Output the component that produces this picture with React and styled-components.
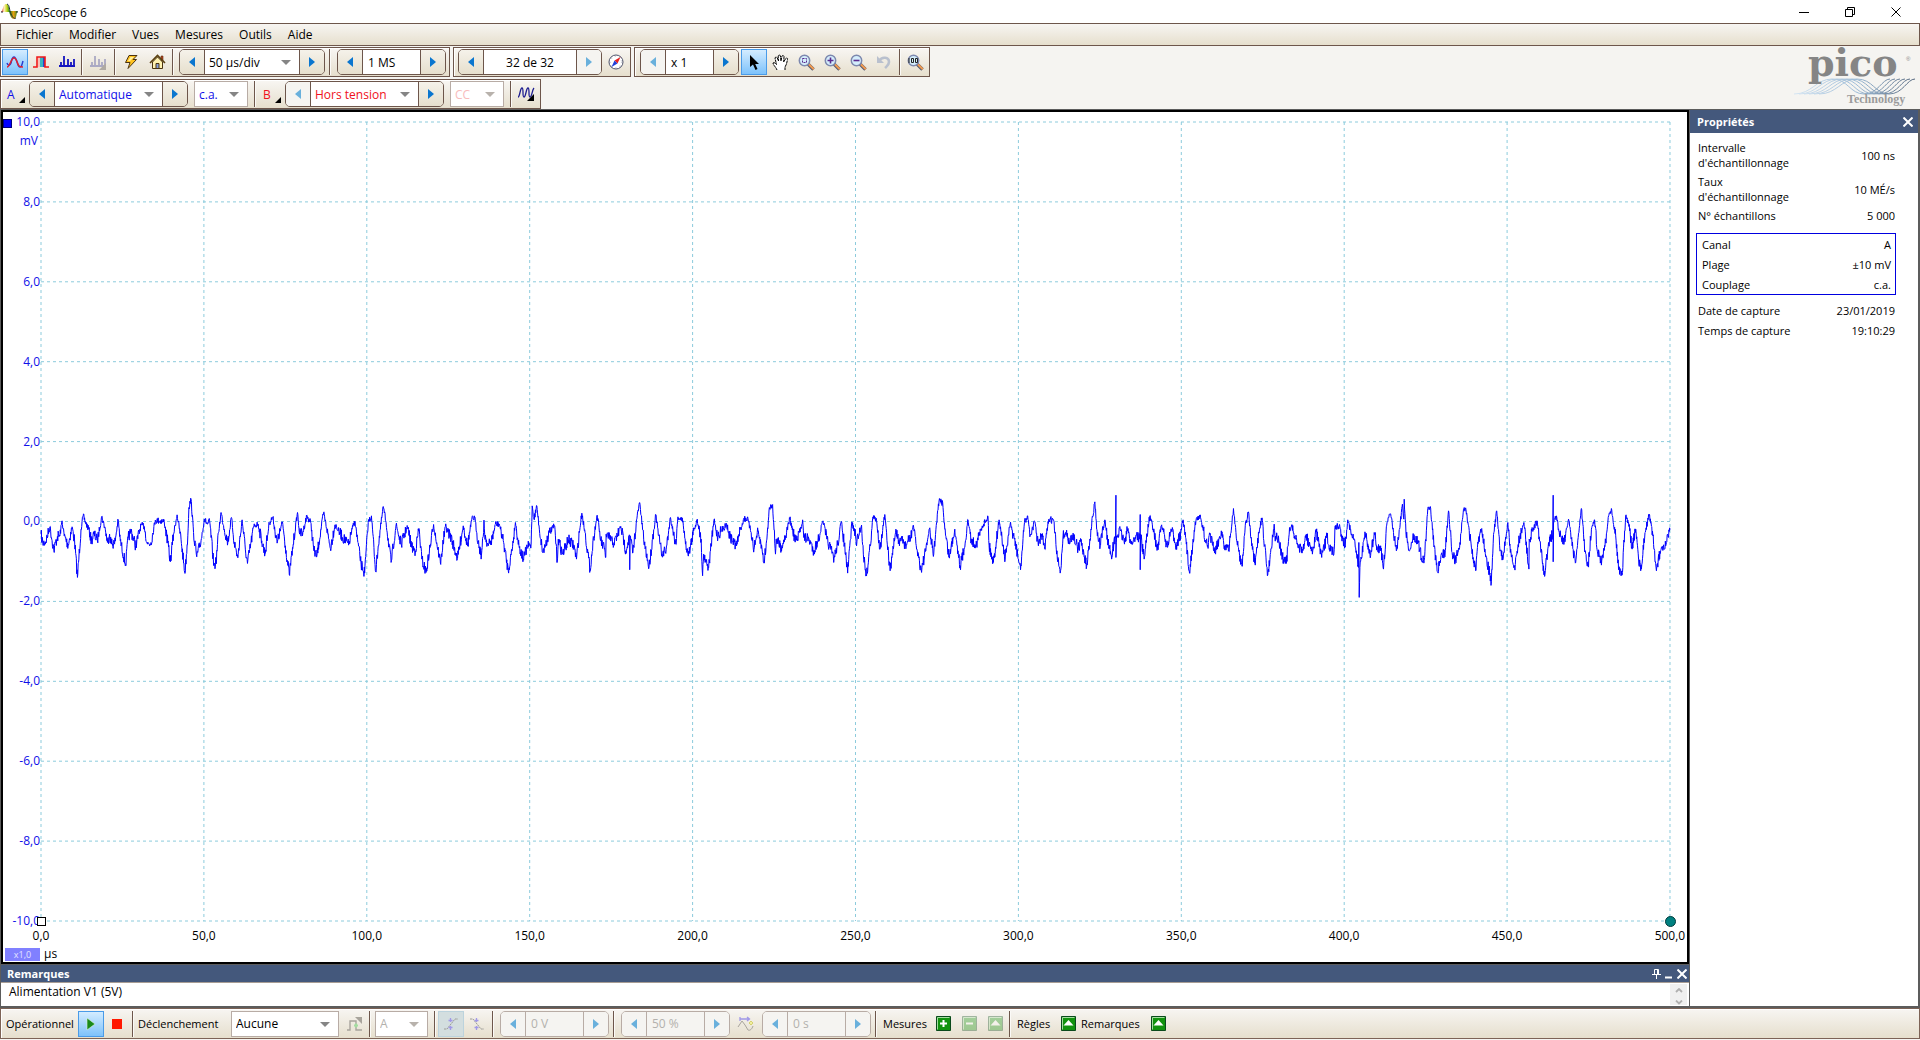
import React from 'react'
import styled, { createGlobalStyle, css } from 'styled-components'

const GlobalStyle = createGlobalStyle`
    * {
        box-sizing: border-box;
    }
    body {
        margin: 0;
        background: #f5f4f1;
        color: #000;
    }
    body, button, input, select, textarea {
        font-family: "Open Sans", "Noto Sans", sans-serif;
        font-size: 12px;
    }
    button, input, select, textarea {
        margin: 0;
        padding: 0;
        border: 0;
        border-radius: 0;
        background: none;
        color: inherit;
        outline: none;
    }
    svg {
        display: block;
    }
`

const Page = styled.div`
    display: flex;
    flex-direction: column;
    height: 100vh;
    overflow: hidden;
`

/* ---------- title bar and menu ---------- */

const TitleBar = styled.header`
    display: flex;
    align-items: center;
    height: 23px;
    padding: 0 1px;
    background: #fff;
`

const Title = styled.h1`
    flex: 1;
    margin: 0;
    padding: 2px 0 0 2px;
    font-size: 12px;
    font-weight: 400;
`

const WindowButton = styled.button`
    display: flex;
    align-items: center;
    justify-content: center;
    width: 46px;
    height: 23px;
`

const MenuBar = styled.nav`
    display: flex;
    align-items: center;
    height: 23px;
    padding-left: 7px;
    border: 1px solid #6d564b;
    background: linear-gradient(#f7f5f2, #e6dfcd);
`

const MenuItem = styled.button`
    padding: 0 8px;
    font-size: 12px;
    line-height: 20px;
`

/* ---------- tool strips ---------- */

const ToolArea = styled.div`
    display: flex;
    justify-content: space-between;
    padding-top: 1px;
`

const ToolRows = styled.div`
    display: flex;
    flex-direction: column;
    gap: 2px;
`

const ToolRow = styled.div`
    display: flex;
    gap: 3px;
`

const Strip = styled.div`
    display: flex;
    align-items: center;
    height: 30px;
    padding: 0 1px;
    border: 1px solid #6d564b;
    box-shadow: inset 1px 1px 0 #fff;
    background: linear-gradient(#f8f6f3, #e6dfcd);
`

const Separator = styled.span`
    width: 1px;
    height: 26px;
    margin: 0 ${p => p.$after || 3}px 0 ${p => p.$before || 3}px;
    background: #6d564b;
    box-shadow: 1px 0 0 #fbfaf7;
`

const ToolButton = styled.button`
    display: flex;
    align-items: center;
    justify-content: center;
    width: 26px;
    height: 26px;
    ${p => p.$active && css`
        border: 1px solid #4a9be8;
        background: linear-gradient(#d4ecff, #7dc2fb);
    `}
    ${p => p.$pressed && css`
        border: 1px solid #bcd3dd;
        background: #d3dedf;
    `}
`

const ChannelButton = styled.button`
    position: relative;
    width: 25px;
    height: 26px;
    padding-left: 5px;
    text-align: left;
    font-size: 12px;
    color: ${p => p.$color};
    &::after {
        content: "";
        position: absolute;
        right: 2px;
        bottom: 4px;
        border-left: 6px solid transparent;
        border-bottom: 6px solid #000;
    }
`

const SpinBox = styled.div`
    display: flex;
    height: 26px;
    margin: 0 ${p => p.$after || 3}px 0 ${p => p.$before || 6}px;
    border: 1px solid ${p => (p.$off ? '#b8aca5' : '#6d564b')};
    border-radius: 5px;
    overflow: hidden;
`

const SpinButton = styled.button`
    display: flex;
    align-items: center;
    justify-content: center;
    width: 24px;
    background: ${p => (p.disabled ? '#f5f4f1' : 'linear-gradient(#f5f2ea, #e6dfcd)')};
    color: ${p => (p.disabled ? '#69b0dc' : '#0a76cf')};
`

const SpinInput = styled.input`
    width: ${p => p.$width}px;
    padding-left: ${p => (p.$center ? 0 : 5)}px;
    text-align: ${p => (p.$center ? 'center' : 'left')};
    border: solid ${p => (p.disabled ? '#b8aca5' : '#6d564b')};
    border-width: 0 1px;
    background: ${p => (p.disabled ? '#f5f4f1' : '#fff')};
    color: ${p => (p.disabled ? '#b3b1ad' : '#000')};
`

const SelectWrap = styled.span`
    position: relative;
    display: flex;
    width: ${p => p.$width}px;
    height: ${p => (p.$boxed ? 26 : 24)}px;
    margin: 0 ${p => p.$after || 0}px 0 ${p => p.$before || 0}px;
    background: #fff;
    border: solid ${p => (p.$boxed ? '#b8aca5' : '#6d564b')};
    border-width: ${p => (p.$boxed ? '1px' : '0 1px')};
    &::after {
        content: "";
        position: absolute;
        right: 8px;
        top: 10px;
        border: solid transparent;
        border-width: 5px 5px 0;
        border-top-color: ${p => (p.$off ? '#b8b2ac' : '#858585')};
        pointer-events: none;
    }
`

const SelectBox = styled.select`
    appearance: none;
    width: 100%;
    padding-left: 4px;
    color: ${p => p.$color || '#000'};
    opacity: 1;
`

const Logo = styled.div`
    padding: 1px 2px 0 0;
    svg {
        overflow: visible;
    }
`

/* ---------- work area ---------- */

const Work = styled.main`
    display: flex;
    flex: 1;
    min-height: 0;
    gap: 1px;
    padding: 1px 2px 2px 1px;
    background: #5c5c5c;
`

const LeftColumn = styled.div`
    display: flex;
    flex: 1;
    flex-direction: column;
    min-width: 0;
`

const Scope = styled.section`
    position: relative;
    display: grid;
    flex: 1;
    min-height: 0;
    grid-template-columns: 38px 1fr;
    grid-template-rows: 1fr 41px;
    padding: 10px 17px 0 0;
    border: 2px solid #000;
    background: #fff;
`

const YAxis = styled.div`
    position: relative;
    display: flex;
    flex-direction: column;
    justify-content: space-between;
    margin: -7px 0;
    padding-right: 1px;
    text-align: right;
    line-height: 14px;
    color: #1010e8;
`

const YUnit = styled.span`
    position: absolute;
    top: 19px;
    right: 3px;
`

const XAxis = styled.div`
    grid-column: 2;
    display: flex;
    justify-content: space-between;
    margin: 8px -15px 0;
    line-height: 14px;
`

const XTick = styled.span`
    display: flex;
    justify-content: center;
    width: 30px;
`

const Graph = styled.svg`
    width: 100%;
    height: 100%;
    overflow: visible;
`

const GraphCell = styled.div`
    position: relative;
    min-height: 0;
`

const ChannelHandle = styled.span`
    position: absolute;
    left: 0;
    top: 7px;
    width: 9px;
    height: 9px;
    border: 1px solid #000080;
    background: #00f;
`

const TimeHandle = styled.span`
    position: absolute;
    left: -4px;
    bottom: -5px;
    width: 9px;
    height: 9px;
    border: 1px solid #000;
    background: #fff;
`

const TriggerHandle = styled.span`
    position: absolute;
    right: -6px;
    bottom: -6px;
    width: 11px;
    height: 11px;
    border: 1px solid #003c3c;
    border-radius: 50%;
    background: #008080;
`

const UnitRow = styled.div`
    position: absolute;
    left: 2px;
    bottom: 1px;
    display: flex;
    align-items: center;
    gap: 4px;
    line-height: 14px;
`

const ZoomBadge = styled.span`
    width: 35px;
    height: 13px;
    background: #8080ff;
    color: #e4e4ff;
    text-align: center;
    font-size: 9px;
    line-height: 13px;
`

/* ---------- docked panels ---------- */

const PanelHead = styled.div`
    display: flex;
    align-items: center;
    gap: 4px;
    height: ${p => p.$height}px;
    padding: 0 ${p => p.$end}px 0 ${p => p.$indent}px;
    background: #44587c;
    color: #fff;
`

const PanelTitle = styled.h2`
    flex: 1;
    margin: 0;
    font-size: 11px;
    font-weight: 700;
`

const PanelButton = styled.button`
    display: flex;
    color: #fff;
`

const Notes = styled.section`
    padding-top: 1px;
`

const NotesBody = styled.div`
    display: flex;
    height: 24px;
    border-top: 1px solid #a89d94;
    background: #fff;
`

const NotesText = styled.textarea`
    flex: 1;
    padding: 1px 8px;
    font-size: 12px;
    line-height: 16px;
    resize: none;
    overflow: hidden;
`

const Scroller = styled.div`
    display: flex;
    flex-direction: column;
    justify-content: space-between;
    align-items: center;
    width: 17px;
    margin: 1px 2px 1px 0;
    padding-top: 4px;
    background: #f0f0f0;
`

const Properties = styled.aside`
    width: 228px;
    background: #fff;
`

const PropList = styled.dl`
    margin: 0;
    padding: 7px 22px 0 6px;
    font-size: 11px;
`

const PropRow = styled.div`
    display: flex;
    align-items: center;
    justify-content: space-between;
    min-height: ${p => p.$height || 20}px;
    margin-bottom: ${p => p.$gap || 0}px;
    padding: 0 1px 0 2px;
    line-height: 15px;
    dt {
        width: 100px;
    }
    dd {
        margin: 0;
        white-space: nowrap;
    }
`

const ChannelProps = styled.div`
    margin: 8px 0 5px;
    border: 1px solid #0000e0;
    padding: 0 3px;
`

/* ---------- status bar ---------- */

const StatusBar = styled.footer`
    display: flex;
    align-items: center;
    height: 31px;
    margin-bottom: 1px;
    padding-left: 5px;
    border: 1px solid #7d6356;
    box-shadow: inset 1px 1px 0 #fff;
    background: linear-gradient(#f7f5f2, #e6dfcd);
`

const StatusLabel = styled.span`
    width: ${p => p.$width}px;
    font-size: 11px;
    white-space: nowrap;
`

/* ---------- icons ---------- */

const Arrow = ({ right }) => (
    <svg width="6" height="10" viewBox="0 0 6 10">
        <path d={right ? 'M0 0l6 5-6 5z' : 'M6 0L0 5l6 5z'} fill="currentColor" />
    </svg>
)

const AppIcon = () => (
    <svg width="17" height="17" viewBox="0 0 17 17">
        <defs>
            <linearGradient id="hump">
                <stop offset="0" stopColor="#e01010" />
                <stop offset=".35" stopColor="#fff4c0" />
                <stop offset=".65" stopColor="#c8d820" />
                <stop offset="1" stopColor="#108010" />
            </linearGradient>
            <linearGradient id="dip">
                <stop offset="0" stopColor="#108010" />
                <stop offset=".5" stopColor="#e8a010" />
                <stop offset="1" stopColor="#208020" />
            </linearGradient>
        </defs>
        <path d="M0 9C2 8 2 1 5 1s3 4 4 8z" fill="url(#hump)" />
        <path d="M8 8h9c-2 1-1 8-4 8s-4-4-5-8z" fill="url(#dip)" />
        <path d="M0 9h2M15 9h2M6 1c3 1 2 6 4 10s3 5 5 4" fill="none" stroke="#243040" />
    </svg>
)

const MinimizeIcon = () => (
    <svg width="10" height="10"><path d="M0 5.5h10" stroke="#000" /></svg>
)

const RestoreIcon = () => (
    <svg width="10" height="10" fill="none" stroke="#000">
        <path d="M.5 2.5h7v7h-7zM2.5 2.5v-2h7v7h-2" />
    </svg>
)

const CloseIcon = ({ size = 10, width = 1 }) => (
    <svg width={size} height={size} viewBox="0 0 10 10">
        <path d="M.5 .5l9 9M9.5 .5l-9 9" stroke="currentColor" strokeWidth={width} />
    </svg>
)

const ScopeIcon = () => (
    <svg width="18" height="14" viewBox="0 0 18 14" fill="none" strokeWidth="1.5">
        <path d="M1 8c1 3 3 3 4 0 1-4 1-6 3-6 3 0 3 10 6 10 2 0 2-3 3-6" stroke="#2a3fd0" />
        <path d="M1 12c3 0 4-9 7-9 3 0 3 6 5 8 1 1 3 1 4 1" stroke="#e02030" />
    </svg>
)

const PersistenceIcon = () => (
    <svg width="18" height="14" viewBox="0 0 18 14">
        <path d="M6 2h2v10H6z" fill="#f8c0b8" />
        <path d="M8 2h3v10H8z" fill="#38b4c0" />
        <path d="M11 2h2v10h-2z" fill="#2848d0" />
        <path d="M1 12h4V2h8v10h4" fill="none" stroke="#f01818" strokeWidth="1.6" />
    </svg>
)

const SpectrumIcon = ({ off }) => (
    <svg width="18" height="16" viewBox="0 0 18 16">
        <path
            d="M1 12h16M3 12V8M6 12V2M10 12V5M13 12V8M16 12V5"
            stroke={off ? '#aaa9c4' : '#1414c0'}
            strokeWidth="1.8"
        />
        {off && <path d="M17 9v7h-7z" fill="#b0aaa2" />}
    </svg>
)

const BoltIcon = () => (
    <svg width="16" height="16" viewBox="0 0 16 16">
        <path d="M6 1.500h8l-4 4h3.500L5 14.500l2-6H2.500z" fill="#ffc21e" stroke="#4a3210" />
        <path d="M7.500 3h3.500l-4 4H5z" fill="#fff0a0" />
    </svg>
)

const HomeIcon = () => (
    <svg width="17" height="16" viewBox="0 0 17 16">
        <path d="M12 2h2v5h-2z" fill="#b84020" stroke="#5a3010" strokeWidth=".6" />
        <path d="M3.500 8v6.500h10V8l-5-5z" fill="#fff2b0" stroke="#4a3410" />
        <path d="M7 9.500h3v5H7z" fill="#8aa0d8" stroke="#4a3410" />
        <path d="M1 9l7.500-7.500L16 9" fill="none" stroke="#5a4010" strokeWidth="1.6" />
    </svg>
)

const CompassIcon = () => (
    <svg width="16" height="16" viewBox="0 0 16 16">
        <circle cx="8" cy="8" r="7" fill="#fff" stroke="#4b5068" />
        <circle cx="8" cy="8" r="5.500" fill="none" stroke="#b8bcc8" strokeDasharray="1 3" />
        <path d="M12.500 3L9.500 9.500l-3-3z" fill="#e82020" />
        <path d="M3.500 13l3-6.500 3 3z" fill="#2040d8" />
    </svg>
)

const PointerIcon = () => (
    <svg width="12" height="17" viewBox="0 0 12 17">
        <path d="M2 1v12l3-2.500 2.500 5.500 2-1-2.300-5H11z" fill="#000" />
    </svg>
)

const HandIcon = () => (
    <svg width="17" height="17" viewBox="0 0 17 17">
        <path
            d="M5 16c-1-3-4-5-4-7 1.500-1 2.500.5 3.500 1.500L3 4c.5-1.500 2-1 2.300 0L6.500 7 6.200 2c.5-1.500 2-1.200 2.200 0L9 7l1-5c.8-1 2-.6 2 .6L11.700 8l2-3.500c1-1 2.300-.2 1.800 1C15 8 14.500 11 13 13v3"
            fill="#fff"
            stroke="#000"
            strokeDasharray="3 .5"
        />
    </svg>
)

const LensIcon = ({ kind }) => (
    <svg width="17" height="17" viewBox="0 0 17 17">
        <path d="M10 10l5.500 5.500" stroke="#555a70" strokeWidth="3.400" />
        <path d="M10.800 10.300l5 5" stroke="#f09a50" strokeWidth="2" />
        <circle cx="6.500" cy="6.500" r="5.200" fill="#d4eefc" stroke="#7d88ae" strokeWidth="1.500" />
        {kind === 'in' && <path d="M3.500 6.500h6M6.500 3.500v6" stroke="#5a2a90" strokeWidth="1.600" />}
        {kind === 'out' && <path d="M3.500 6.500h6" stroke="#5a2a90" strokeWidth="1.600" />}
        {kind === 'area' && (
            <path d="M4.500 4.500h4v4h-4z" fill="none" stroke="#5a2a90" strokeDasharray="2 1" />
        )}
        {kind === 'full' && (
            <path
                d="M2 4v5M4.500 4.500h2v4h-2zM8.500 4.500h2v4h-2z"
                fill="none"
                stroke="#222"
            />
        )}
    </svg>
)

const UndoIcon = () => (
    <svg width="16" height="16" viewBox="0 0 16 16">
        <path d="M3 7c3-5 10-4 10 1 0 3-2 4-4 6" fill="none" stroke="#b9c0ce" strokeWidth="2.600" />
        <path d="M1 2v7h7z" fill="#b9c0ce" />
    </svg>
)

const WavesIcon = () => (
    <svg width="18" height="16" viewBox="0 0 18 16">
        <path d="M1 11c2 0 2-9 4-9s0 9 2 9 2-9 4-9 0 9 2 9 2-7 4-9" fill="none" stroke="#1c1c90" strokeWidth="1.300" />
        <path d="M17 8v7h-7z" fill="#000" />
    </svg>
)

const PlayIcon = () => (
    <svg width="10" height="14" viewBox="0 0 10 14">
        <path d="M1 1l8 6-8 6z" fill="#1a8a1a" stroke="#dff5df" strokeWidth=".6" />
    </svg>
)

const StopIcon = () => (
    <svg width="10" height="10"><path d="M0 0h10v10H0z" fill="#ff1800" /></svg>
)

const AdvancedTriggerIcon = () => (
    <svg width="17" height="16" viewBox="0 0 17 16">
        <path d="M1 14h3V5h6v9h6" fill="none" stroke="#a8a49c" strokeWidth="1.400" />
        <path d="M9 1h7v7z" fill="#a8a49c" />
        <path d="M8 9.500h4M10 7.500v4" stroke="#a4dca0" strokeWidth="2" />
    </svg>
)

const EdgeIcon = ({ falling }) => (
    <svg width="16" height="14" viewBox="0 0 16 14" fill="none">
        <path
            d={falling ? 'M1 2h3l8 10h3' : 'M1 12h3l8-10h3'}
            stroke="#9c9c98"
            strokeDasharray="2 .6"
        />
        <path d="M7.500 1v4M5.500 3.500h4M7.500 9v4M5.500 10.500h4" stroke="#a098e8" strokeWidth="1.300" />
    </svg>
)

const DelayIcon = () => (
    <svg width="17" height="16" viewBox="0 0 17 16" fill="none">
        <path d="M1 11l4-6 3 4 3 5c2 1 4-1 5-4" stroke="#a8a49c" />
        <path d="M3 3h9M10 1l2.500 2L10 5M3 1v4" stroke="#a098e8" strokeWidth="1.300" />
        <path d="M14 5l2 2-2 2-2-2z" stroke="#d4d070" fill="#f0ee9c" />
    </svg>
)

const GreenIcon = ({ sign, off }) => (
    <svg width="15" height="15" viewBox="0 0 15 15" opacity={off ? 0.35 : 1}>
        <path d="M.5 .5h14v14H.5z" fill="#12930f" stroke="#0a4a1c" />
        <path d="M1.500 13.500v-12h12" fill="none" stroke="#a5dca0" />
        {sign === 'plus' && <path d="M4 7.500h7M7.500 4v7" stroke="#fff" strokeWidth="2" />}
        {sign === 'minus' && <path d="M4 7.500h7" stroke="#fff" strokeWidth="2" />}
        {sign === 'up' && <path d="M7.500 4l5 5.500h-10z" fill="#fff" />}
    </svg>
)

const PinIcon = () => (
    <svg width="9" height="10" viewBox="0 0 9 10" fill="none" stroke="#fff">
        <path d="M2.500 5.500v-5h4v5M0 5.500h9M5.500 .5v5M4.500 6v4" />
    </svg>
)

const DockMinIcon = () => (
    <svg width="8" height="10"><path d="M0 8.500h7" stroke="#fff" strokeWidth="2" /></svg>
)

const Chevron = ({ down }) => (
    <svg width="8" height="5" viewBox="0 0 8 5">
        <path d={down ? 'M1 .5l3 3 3-3' : 'M1 4l3-3 3 3'} fill="none" stroke="#b0b0b0" strokeWidth="1.800" />
    </svg>
)

const logoWaves = [0, 5, 10, 15, 20, 25]

const PicoLogo = () => (
    <svg width="122" height="60" viewBox="0 0 122 60" role="img" aria-label="pico Technology">
        <defs>
            <linearGradient id="wave" gradientUnits="userSpaceOnUse" x1="0" y1="0" x2="122" y2="0">
                <stop offset="0" stopColor="#d3e4f2" />
                <stop offset=".5" stopColor="#9dbbd6" />
                <stop offset="1" stopColor="#4f6178" />
            </linearGradient>
        </defs>
        {logoWaves.map(x => (
            <path
                key={x}
                d={`M${x - 2} 46C${x + 16} 46 ${x + 20} 31 ${x + 36} 31S${x + 54} 46 ${x + 68} 46S${x + 86} 31 ${x + 94} 31`}
                fill="none"
                stroke="url(#wave)"
            />
        ))}
        <text x="12" y="28" fontFamily="DejaVu Serif" fontWeight="700" fontSize="38" fill="#858585">pico</text>
        <text x="110" y="13" fontFamily="Liberation Sans" fontSize="6" fill="#858585">®</text>
        <text x="51" y="55" fontFamily="Liberation Serif" fontWeight="700" fontSize="12" fill="#9b9b9b">Technology</text>
    </svg>
)

/* ---------- trace ---------- */

// turning points of the capture, [time, level] in acquisition counts;
// every block keeps its own time origin
const blocks = [
    {
        offset: -32,
        points: [
            [32, 165], [37, 192], [45, 188], [57, 143], [68, 213], [78, 172], [85, 170], [91, 125], [97, 170],
            [108, 198], [119, 143], [126, 185], [134, 295], [144, 150], [150, 110], [158, 133], [166, 150],
            [173, 185], [180, 165], [190, 183], [202, 112], [212, 150], [218, 190], [224, 165], [228, 190],
            [238, 195], [248, 122], [254, 185], [269, 257], [276, 175], [284, 155], [297, 200], [312, 138],
            [321, 142], [330, 195], [340, 190], [352, 123], [377, 127], [387, 190], [394, 248], [403, 165],
            [413, 107], [424, 180], [435, 283], [443, 170], [446, 85], [452, 60], [459, 160], [468, 233],
            [480, 185], [489, 120], [498, 135], [504, 125], [516, 260], [522, 250], [529, 160], [536, 100],
            [545, 150], [555, 190], [565, 115], [573, 190], [583, 236], [595, 122], [604, 210], [610, 253],
            [628, 140], [640, 135], [650, 185], [659, 225], [671, 130], [681, 115], [693, 192], [708, 128],
            [716, 200], [727, 286], [738, 195], [750, 100], [756, 165], [765, 160], [776, 110], [787, 130],
            [796, 215], [804, 232], [823, 100], [835, 165], [842, 208], [855, 137], [868, 160], [880, 180],
            [893, 198], [903, 150], [911, 127], [919, 190], [928, 255], [938, 282], [948, 130], [957, 110],
            [969, 278], [976, 200], [990, 82], [998, 130], [1012, 250], [1026, 137], [1040, 195], [1058, 142],
            [1070, 205], [1080, 215], [1090, 148], [1098, 240], [1110, 280], [1131, 136], [1150, 252],
            [1164, 142], [1180, 175], [1198, 238], [1214, 140], [1226, 200], [1238, 120], [1246, 115],
            [1256, 190], [1265, 228], [1271, 160], [1272, 123], [1274, 165], [1284, 200], [1295, 180],
            [1304, 135], [1315, 135], [1327, 190], [1340, 275], [1350, 215], [1360, 130], [1370, 200],
            [1382, 240], [1393, 205], [1404, 195], [1407, 80], [1412, 120], [1420, 80], [1427, 150],
            [1437, 220], [1455, 160], [1470, 140], [1477, 250], [1480, 180], [1492, 225], [1508, 182],
            [1524, 200], [1531, 240],
        ],
    },
    {
        offset: 1507,
        points: [
            [0, 160], [7, 102], [16, 160], [30, 272], [40, 175], [50, 108], [60, 185], [70, 210], [74, 235],
            [75, 165], [97, 193], [116, 142], [130, 215], [141, 170], [141, 272], [142, 170], [150, 220],
            [162, 110], [169, 70], [180, 180], [195, 265], [205, 180], [214, 106], [222, 170], [231, 225],
            [243, 212], [255, 115], [270, 195], [276, 113], [290, 125], [297, 195], [307, 222], [320, 155],
            [330, 120], [341, 180], [345, 290], [348, 225], [362, 265], [377, 122], [386, 170], [397, 155],
            [412, 135], [422, 175], [440, 200], [447, 165], [460, 120], [470, 118], [481, 160], [489, 210],
            [498, 160], [508, 192], [517, 250], [525, 180], [532, 85], [541, 76], [549, 225], [551, 180],
            [565, 205], [577, 170], [589, 118], [602, 175], [610, 185], [625, 122], [628, 175], [643, 180],
            [656, 215], [668, 185], [682, 125], [693, 180], [713, 238], [724, 190], [733, 128], [742, 195],
            [751, 282], [763, 128], [777, 188], [790, 138], [795, 225], [804, 290], [814, 200], [822, 113],
            [832, 125], [842, 210], [855, 106], [862, 195], [870, 275], [886, 150], [896, 200], [903, 175],
            [912, 200], [927, 175], [934, 140], [946, 215], [957, 272], [970, 215], [979, 150], [992, 225],
            [1000, 130], [1007, 65], [1017, 70], [1023, 150], [1035, 235], [1051, 150], [1060, 215],
            [1066, 260], [1077, 210], [1088, 122], [1098, 190], [1112, 192], [1128, 140], [1144, 113],
            [1147, 200], [1159, 250], [1175, 122], [1192, 240], [1206, 135], [1218, 180], [1229, 240],
            [1235, 272], [1246, 130], [1255, 110], [1262, 170], [1275, 127], [1285, 200], [1294, 165],
            [1303, 210], [1314, 120], [1328, 125], [1338, 240], [1347, 275], [1354, 170], [1363, 160],
            [1372, 195], [1383, 165], [1396, 210], [1404, 185], [1420, 262], [1432, 150], [1443, 68],
            [1450, 170], [1458, 200], [1471, 122], [1480, 190], [1489, 228], [1501, 175], [1502, 48],
            [1502, 235], [1504, 170],
        ],
    },
    {
        offset: 3020,
        points: [
            [2, 155], [12, 188], [22, 152], [33, 195], [47, 165], [56, 180], [57, 106], [57, 272], [58, 165],
            [68, 240], [76, 165], [84, 110], [93, 150], [105, 210], [116, 140], [124, 165], [133, 205],
            [144, 150], [158, 198], [170, 165], [177, 122], [186, 195], [195, 282], [205, 180], [213, 125],
            [223, 108], [234, 155], [247, 208], [252, 165], [267, 222], [284, 155], [293, 200], [305, 215],
            [318, 88], [328, 190], [342, 262], [351, 140], [360, 98], [369, 200], [379, 258], [389, 160],
            [398, 116], [405, 200], [414, 288], [422, 220], [432, 135], [434, 170], [445, 185], [455, 235],
            [466, 253], [474, 165], [481, 137], [492, 180], [510, 222], [522, 165], [530, 200], [540, 215],
            [550, 158], [565, 235], [580, 170], [590, 215], [600, 212], [602, 145], [614, 140], [630, 200],
            [638, 122], [650, 170], [660, 205], [668, 265], [669, 190], [670, 355], [672, 265], [686, 158],
            [700, 225], [714, 168], [722, 215], [730, 200], [738, 270], [748, 130], [755, 105], [762, 125],
            [774, 215], [785, 130], [791, 75], [795, 120], [796, 60], [801, 165], [811, 215], [824, 168],
            [836, 190], [847, 250], [853, 235], [862, 88], [869, 82], [880, 200], [889, 278], [903, 228],
            [911, 215], [920, 95], [930, 220], [940, 247], [952, 190], [962, 90], [969, 92], [985, 210],
            [996, 275], [1004, 180], [1013, 148], [1025, 230], [1040, 308], [1047, 160], [1055, 95],
            [1063, 200], [1072, 242], [1086, 130], [1093, 220], [1105, 265], [1118, 180], [1131, 130],
            [1145, 270], [1146, 180], [1155, 155], [1168, 125], [1178, 210], [1189, 292], [1200, 190],
            [1212, 165], [1213, 48], [1213, 248], [1214, 130], [1222, 110], [1230, 160], [1244, 185],
            [1256, 120], [1266, 200], [1275, 252], [1285, 160], [1292, 88], [1302, 215], [1311, 262],
            [1320, 150], [1329, 122], [1338, 225], [1349, 243], [1360, 185], [1368, 110], [1376, 88],
            [1388, 170], [1397, 270], [1406, 288], [1416, 110], [1424, 130], [1434, 210], [1444, 150],
            [1452, 240], [1460, 270], [1470, 160], [1482, 105], [1492, 170], [1502, 275], [1512, 220],
            [1525, 210], [1540, 152],
        ],
    },
]

const ZERO = 127

const buildTrace = () => {
    const turns = blocks.flatMap(b => b.points.map(([x, y]) => [x + b.offset, y - ZERO + 1200]))
    let seed = 7
    const noise = () => {
        seed = (seed * 16807) % 2147483647
        return seed / 2147483647 - 0.5
    }
    const out = []
    turns.forEach(([x, y], i) => {
        out.push(`${x},${y}`)
        const next = turns[i + 1]
        if (!next) return
        for (let s = x + 1; s < next[0]; s += 1) {
            const t = (s - x) / (next[0] - x)
            const base = y + (next[1] - y) * t
            // the sampling noise is stronger below zero than on the peaks
            const amp = base > 1230 ? 34 : 20
            out.push(`${s},${(base + noise() * amp).toFixed(0)}`)
        }
    })
    return out.join(' ')
}

const trace = buildTrace()

const divisions = [0, 1, 2, 3, 4, 5, 6, 7, 8, 9, 10]
const yTicks = ['10,0', '8,0', '6,0', '4,0', '2,0', '0,0', '-2,0', '-4,0', '-6,0', '-8,0', '-10,0']
const xTicks = ['0,0', '50,0', '100,0', '150,0', '200,0', '250,0', '300,0', '350,0', '400,0', '450,0', '500,0']
const menus = ['Fichier', 'Modifier', 'Vues', 'Mesures', 'Outils', 'Aide']

const Select = ({ label, value, color, ...box }) => (
    <SelectWrap {...box}>
        <SelectBox aria-label={label} $color={color} disabled={box.$off} defaultValue={value}>
            <option>{value}</option>
        </SelectBox>
    </SelectWrap>
)

const Spin = ({ label, off, prevOff, nextOff, before, after, children }) => (
    <SpinBox $off={off} $before={before} $after={after}>
        <SpinButton aria-label={`${label} -`} disabled={off || prevOff}><Arrow /></SpinButton>
        {children}
        <SpinButton aria-label={`${label} +`} disabled={off || nextOff}><Arrow right /></SpinButton>
    </SpinBox>
)

const Property = ({ name, value, height, gap }) => (
    <PropRow $height={height} $gap={gap}>
        <dt>{name}</dt>
        <dd>{value}</dd>
    </PropRow>
)

const Toolbars = () => (
    <ToolArea>
        <ToolRows>
            <ToolRow>
                <Strip>
                    <ToolButton $active aria-label="Oscilloscope"><ScopeIcon /></ToolButton>
                    <ToolButton aria-label="Persistance"><PersistenceIcon /></ToolButton>
                    <ToolButton aria-label="Spectre"><SpectrumIcon /></ToolButton>
                    <Separator $before={1} />
                    <ToolButton disabled aria-label="Options du spectre"><SpectrumIcon off /></ToolButton>
                    <Separator />
                    <ToolButton aria-label="Configuration auto"><BoltIcon /></ToolButton>
                    <ToolButton aria-label="Accueil"><HomeIcon /></ToolButton>
                    <Separator $before={2} $after={1} />
                    <Spin label="Base de temps" before={5}>
                        <Select label="Base de temps" value="50 µs/div" $width={96} />
                    </Spin>
                    <Separator $before={1} $after={1} />
                    <Spin label="Échantillons" after={2}>
                        <SpinInput aria-label="Échantillons" defaultValue="1 MS" $width={59} />
                    </Spin>
                </Strip>
                <Strip>
                    <Spin label="Tampon" nextOff before={3} after={1}>
                        <SpinInput aria-label="Tampon" defaultValue="32 de 32" $width={94} $center />
                    </Spin>
                    <ToolButton aria-label="Navigateur"><CompassIcon /></ToolButton>
                </Strip>
                <Strip>
                    <Spin label="Zoom" prevOff before={4} after={2}>
                        <SpinInput aria-label="Zoom" defaultValue="x 1" $width={49} />
                    </Spin>
                    <ToolButton $active aria-label="Sélection"><PointerIcon /></ToolButton>
                    <ToolButton aria-label="Main"><HandIcon /></ToolButton>
                    <ToolButton aria-label="Zoom de zone"><LensIcon kind="area" /></ToolButton>
                    <ToolButton aria-label="Zoom avant"><LensIcon kind="in" /></ToolButton>
                    <ToolButton aria-label="Zoom arrière"><LensIcon kind="out" /></ToolButton>
                    <ToolButton disabled aria-label="Annuler le zoom"><UndoIcon /></ToolButton>
                    <Separator $before={2} $after={2} />
                    <ToolButton aria-label="Zoom 100"><LensIcon kind="full" /></ToolButton>
                </Strip>
            </ToolRow>
            <ToolRow>
                <Strip>
                    <ChannelButton $color="#1010e8">A</ChannelButton>
                    <Spin label="Plage A" before={2}>
                        <Select label="Plage A" value="Automatique" color="#1010e8" $width={109} />
                    </Spin>
                    <Select label="Couplage A" value="c.a." color="#1010e8" $width={54} $boxed $before={3} $after={3} />
                    <Separator />
                    <ChannelButton $color="#f01020">B</ChannelButton>
                    <Spin label="Plage B" prevOff before={2}>
                        <Select label="Plage B" value="Hors tension" color="#f01020" $width={109} />
                    </Spin>
                    <Select label="Couplage B" value="CC" color="#f8bcbc" $width={54} $boxed $off $before={3} $after={3} />
                    <Separator $after={2} />
                    <ToolButton aria-label="Générateur"><WavesIcon /></ToolButton>
                </Strip>
            </ToolRow>
        </ToolRows>
        <Logo><PicoLogo /></Logo>
    </ToolArea>
)

const ScopeView = () => (
    <Scope>
        <YAxis>
            {yTicks.map(t => <span key={t}>{t}</span>)}
            <YUnit>mV</YUnit>
        </YAxis>
        <GraphCell>
            <Graph viewBox="0 0 4560 2400" preserveAspectRatio="none" shapeRendering="crispEdges">
                <g stroke="#8ccbdc" strokeDasharray="3 3">
                    {divisions.map(d => (
                        <React.Fragment key={d}>
                            <path d={`M0 ${d * 240}H4560`} vectorEffect="non-scaling-stroke" />
                            <path d={`M${d * 456} 0V2400`} vectorEffect="non-scaling-stroke" />
                        </React.Fragment>
                    ))}
                </g>
                <polyline points={trace} fill="none" stroke="#0000ff" vectorEffect="non-scaling-stroke" />
            </Graph>
            <TimeHandle />
            <TriggerHandle />
        </GraphCell>
        <XAxis>
            {xTicks.map(t => <XTick key={t}>{t}</XTick>)}
        </XAxis>
        <ChannelHandle />
        <UnitRow>
            <ZoomBadge>x1,0</ZoomBadge>
            µs
        </UnitRow>
    </Scope>
)

const App = () => {
    return (
        <>
            <GlobalStyle />
            <Page>
                <TitleBar>
                    <AppIcon />
                    <Title>PicoScope 6</Title>
                    <WindowButton aria-label="Réduire"><MinimizeIcon /></WindowButton>
                    <WindowButton aria-label="Restaurer"><RestoreIcon /></WindowButton>
                    <WindowButton aria-label="Fermer"><CloseIcon /></WindowButton>
                </TitleBar>
                <MenuBar>
                    {menus.map(m => <MenuItem key={m}>{m}</MenuItem>)}
                </MenuBar>
                <Toolbars />

                <Work>
                    <LeftColumn>
                        <ScopeView />
                        <Notes>
                            <PanelHead $height={17} $indent={6} $end={2}>
                                <PanelTitle>Remarques</PanelTitle>
                                <PanelButton aria-label="Épingler"><PinIcon /></PanelButton>
                                <PanelButton aria-label="Réduire le volet"><DockMinIcon /></PanelButton>
                                <PanelButton aria-label="Fermer le volet"><CloseIcon width={2} /></PanelButton>
                            </PanelHead>
                            <NotesBody>
                                <NotesText aria-label="Remarques" defaultValue="Alimentation V1 (5V)" />
                                <Scroller>
                                    <Chevron />
                                    <Chevron down />
                                </Scroller>
                            </NotesBody>
                        </Notes>
                    </LeftColumn>
                    <Properties>
                        <PanelHead $height={23} $indent={7} $end={5}>
                            <PanelTitle>Propriétés</PanelTitle>
                            <PanelButton aria-label="Fermer les propriétés"><CloseIcon width={2} /></PanelButton>
                        </PanelHead>
                        <PropList>
                            <Property name="Intervalle d'échantillonnage" value="100 ns" height={30} gap={4} />
                            <Property name="Taux d'échantillonnage" value="10 MÉ/s" height={30} gap={1} />
                            <Property name="N° échantillons" value="5 000" />
                            <ChannelProps>
                                <Property name="Canal" value="A" />
                                <Property name="Plage" value="±10 mV" />
                                <Property name="Couplage" value="c.a." />
                            </ChannelProps>
                            <Property name="Date de capture" value="23/01/2019" />
                            <Property name="Temps de capture" value="19:10:29" />
                        </PropList>
                    </Properties>
                </Work>

                <StatusBar>
                    <StatusLabel $width={72}>Opérationnel</StatusLabel>
                    <ToolButton $active aria-label="Démarrer"><PlayIcon /></ToolButton>
                    <ToolButton aria-label="Arrêter"><StopIcon /></ToolButton>
                    <Separator $before={2} $after={5} />
                    <StatusLabel $width={93}>Déclenchement</StatusLabel>
                    <Select label="Déclenchement" value="Aucune" $width={108} $boxed $after={2} />
                    <ToolButton disabled aria-label="Déclenchement avancé"><AdvancedTriggerIcon /></ToolButton>
                    <Separator $before={2} $after={5} />
                    <Select label="Source" value="A" color="#b3b1ad" $width={53} $boxed $off $after={3} />
                    <Separator />
                    <ToolButton disabled $pressed aria-label="Front montant"><EdgeIcon /></ToolButton>
                    <ToolButton disabled aria-label="Front descendant"><EdgeIcon falling /></ToolButton>
                    <Separator $before={2} $after={1} />
                    <Spin label="Seuil" off after={3}>
                        <SpinInput aria-label="Seuil" defaultValue="0 V" $width={59} disabled />
                    </Spin>
                    <Separator $after={1} $before={1} />
                    <Spin label="Pré-déclenchement" off after={2}>
                        <SpinInput aria-label="Pré-déclenchement" defaultValue="50 %" $width={59} disabled />
                    </Spin>
                    <ToolButton disabled aria-label="Retard"><DelayIcon /></ToolButton>
                    <Spin label="Retard" off before={4}>
                        <SpinInput aria-label="Retard" defaultValue="0 s" $width={59} disabled />
                    </Spin>
                    <Separator $before={1} $after={7} />
                    <StatusLabel $width={47}>Mesures</StatusLabel>
                    <ToolButton aria-label="Ajouter une mesure"><GreenIcon sign="plus" /></ToolButton>
                    <ToolButton disabled aria-label="Supprimer la mesure"><GreenIcon sign="minus" off /></ToolButton>
                    <ToolButton disabled aria-label="Modifier la mesure"><GreenIcon sign="up" off /></ToolButton>
                    <Separator $before={1} $after={7} />
                    <StatusLabel $width={38}>Règles</StatusLabel>
                    <ToolButton aria-label="Règles"><GreenIcon sign="up" /></ToolButton>
                    <StatusLabel $width={64}>Remarques</StatusLabel>
                    <ToolButton aria-label="Remarques"><GreenIcon sign="up" /></ToolButton>
                </StatusBar>
            </Page>
        </>
    )
}

export default App
